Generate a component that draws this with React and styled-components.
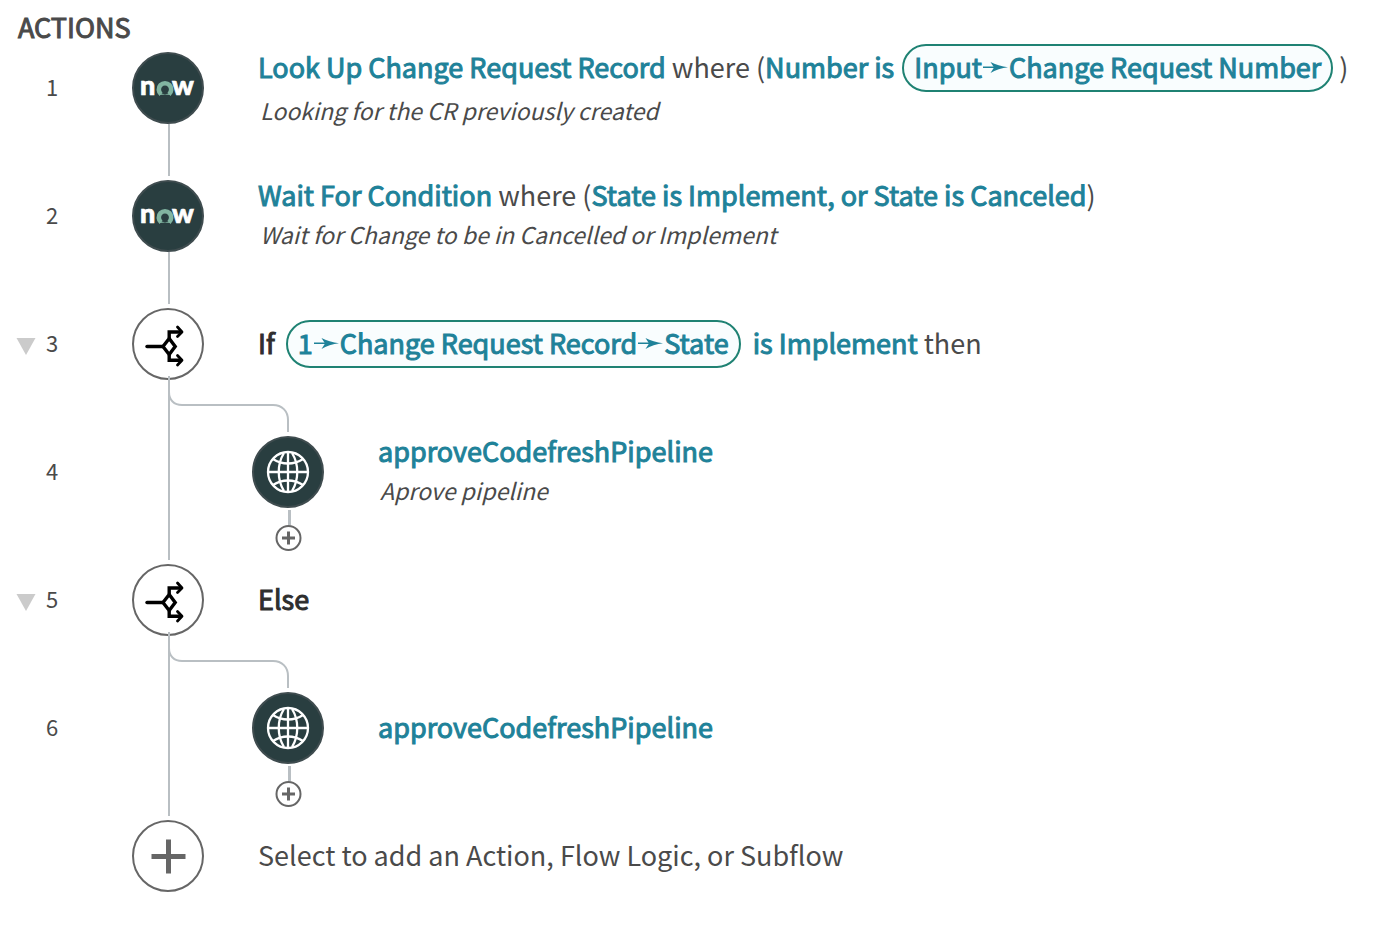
import React from "react";
import styled, { createGlobalStyle, css } from "styled-components";

const GlobalStyle = createGlobalStyle`
  * { box-sizing: border-box; }
  body {
    margin: 0;
    background: #fff;
    color: #4a4a4a;
    font-family: "Noto Sans CJK SC", "Noto Sans CJK JP", sans-serif;
  }
  svg { display: block; overflow: visible; flex: none; }
  button { font: inherit; color: inherit; background: none; border: 0; padding: 0; cursor: pointer; }
`;

const Page = styled.main`
  padding-bottom: 32px;
`;

const Heading = styled.h2`
  margin: 0;
  height: 52px;
  padding: 7px 18px 0;
  font-size: 27px;
  line-height: 40px;
  font-weight: 400;
  -webkit-text-stroke: 1px currentColor;
`;

const Steps = styled.ol`
  list-style: none;
  margin: 0;
  padding: 0;
`;

const Step = styled.li`
  display: flex;
  height: ${(p) => (p.$last ? 72 : 128)}px;
`;

const Gutter = styled.div`
  flex: none;
  width: 132px;
  height: 72px;
  padding-left: 16px;
  display: grid;
  grid-template-columns: 20px 1fr;
  column-gap: 10px;
  align-items: center;
  font-size: 22px;
  line-height: 32px;
`;

const Toggle = styled.button`
  height: 20px;
`;

const StepNumber = styled.span`
  grid-column: 2;
  padding-bottom: 4px;
`;

const Trunk = styled.div`
  flex: none;
  width: 120px;
  height: 124px;
  padding-left: 36px;

  &::before {
    content: "";
    display: block;
    width: 2px;
    height: 100%;
    background: #b9bfc3;
  }
`;

const Rail = styled.div`
  flex: none;
  width: 72px;
`;

const discStyle = css`
  display: flex;
  align-items: center;
  justify-content: center;
  width: 72px;
  height: 72px;
  border: 2px solid ${(p) => (p.$dark ? "#3f4c4f" : "#666")};
  border-radius: 50%;
  background: ${(p) => (p.$dark ? "#293e40" : "#fff")};
`;

const Disc = styled.div`${discStyle}`;
const AddDisc = styled.button`
  &&& {
    ${discStyle}
  }
`;

const Link = styled.div`
  width: 2px;
  height: 52px;
  margin-left: 36px;
  background: #b9bfc3;
`;

const BranchLink = styled.svg`
  margin: -4px 0 0 36px;
`;

const AddStem = styled.div`
  width: 3px;
  height: 15px;
  margin: 2px 0 0 36px;
  background: #b9bfc3;
`;

const AddInside = styled.button`
  display: block;
  width: 26px;
  height: 26px;
  margin-left: 24px;
`;

const Copy = styled.div`
  flex: 1;
  min-width: 0;
  height: 72px;
  padding-left: 54px;
  display: flex;
  flex-direction: column;
  justify-content: center;
`;

const Line = styled.div`
  flex: none;
  display: flex;
  align-items: center;
  min-height: 40px;
  font-size: 27px;
  line-height: 38px;
  white-space: pre;

  & > * {
    padding-bottom: 2px;
  }
`;

const Note = styled.div`
  flex: none;
  height: 40px;
  padding-left: 2px;
  font-size: 23px;
  line-height: 36px;
  font-style: italic;
  white-space: nowrap;
`;

const Strong = styled.span`
  color: ${(p) => (p.$plain ? "#2e2e2e" : "#1f8299")};
  -webkit-text-stroke: 1px currentColor;
`;

const Name = styled.a`
  color: #1f8299;
  text-decoration: none;
  -webkit-text-stroke: 1px currentColor;
`;

const Pill = styled.span`
  display: inline-flex;
  align-items: center;
  height: 48px;
  margin: 0 ${(p) => (p.$wide ? 12 : 6)}px 0 ${(p) => (p.$wide ? 11 : 8)}px;
  padding: 0 10px 2px;
  border: 2px solid #1f8273;
  border-radius: 24px;
  background: #f9fdfe;
  color: #1f8299;
  -webkit-text-stroke: 1px currentColor;
`;

const Wordmark = styled.text`
  font-family: Lato, sans-serif;
  font-size: 27px;
  font-weight: 900;
  fill: #fff;
  stroke: #fff;
  stroke-width: 0.7px;
`;

const NowLogo = () => (
  <svg width="54" height="24" viewBox="0 0 54 24" role="img" aria-label="now">
    <Wordmark x="-1" y="19">n</Wordmark>
    <path d="M20 18.200A6.200 6.200 0 1 1 28 18.200" fill="none" stroke="#81b5a1" strokeWidth="4.6" />
    <path d="M19 16.500Q24 20 29 16.500L29 19Q24 18 19 19Z" fill="#81b5a1" />
    <Wordmark x="31" y="19">w</Wordmark>
  </svg>
);

const BranchIcon = () => (
  <svg width="42" height="42" viewBox="0 0 42 42" fill="none" stroke="#000" strokeWidth="3.4" aria-hidden="true">
    <path d="M0 23.500H16" strokeLinecap="round" />
    <path d="M22.200 15.500L28.200 23.500L22.200 31.500L16 23.500Z" />
    <path d="M22.200 15V9H34M22.200 32V37.300H34" />
    <path d="M30.500 4L35 9L30.500 13.500M30.500 32.500L35 37.300L30.500 42" strokeWidth="2.8" strokeLinecap="round" strokeLinejoin="round" />
  </svg>
);

const GlobeIcon = () => (
  <svg width="42" height="42" viewBox="0 0 42 42" fill="none" stroke="#fff" strokeWidth="2.3" aria-hidden="true">
    <circle cx="21" cy="21" r="20" />
    <path d="M21 1V41M1 21H41" />
    <path d="M17 2C10 13 10 29 17 40M25 2C32 13 32 29 25 40" />
    <path d="M6 8C15 14 27 14 36 8M6 34C15 28 27 28 36 34" />
  </svg>
);

const Arrow = () => (
  <svg width="27" height="12" viewBox="0 0 27 12" aria-hidden="true">
    <path d="M1 5.500H12V7H1Z" fill="currentColor" stroke="none" />
    <path d="M8.500 1C13 3.700 20 5.500 26 6.300C20 7 13 9 8.500 12L12 6.500Z" fill="currentColor" stroke="none" />
  </svg>
);

const PlusIcon = () => (
  <svg width="34" height="34" viewBox="0 0 34 34" aria-hidden="true">
    <path d="M17.500 0.500V34.500M0.500 17.500H34.500" stroke="#666" strokeWidth="5" />
  </svg>
);

const Collapse = ({ label }) => (
  <Toggle type="button" aria-label={label} aria-expanded="true">
    <svg width="20" height="20" viewBox="0 0 20 20" aria-hidden="true">
      <path d="M0.500 4H19.500L10 21Z" fill="#cbcbcb" />
    </svg>
  </Toggle>
);

const BranchConnector = () => (
  <BranchLink width="122" height="60" viewBox="0 0 122 60" fill="none" stroke="#b9bfc3" strokeWidth="2" aria-hidden="true">
    <path d="M1 0V60" />
    <path d="M1 16C1 24 6 29 14 29H105C114 29 120 35 120 44V56" />
  </BranchLink>
);

const AddStep = () => (
  <>
    <AddStem />
    <AddInside type="button" aria-label="Add step to branch">
      <svg width="26" height="26" viewBox="0 0 26 26" fill="none" stroke="#666" aria-hidden="true">
        <circle cx="12.500" cy="13" r="12" strokeWidth="2" />
        <path d="M12.500 6.500V19.500M6 13H19" strokeWidth="3" />
      </svg>
    </AddInside>
  </>
);

const Row = ({ number, kind, collapsible, children }) => {
  const nested = kind === "nested";
  const branch = kind === "branch";
  return (
    <Step>
      <Gutter>
        {collapsible && <Collapse label={`Collapse step ${number}`} />}
        <StepNumber>{number}</StepNumber>
      </Gutter>
      {nested && <Trunk />}
      <Rail>
        <Disc $dark={!branch}>
          {nested ? <GlobeIcon /> : branch ? <BranchIcon /> : <NowLogo />}
        </Disc>
        {nested ? <AddStep /> : branch ? <BranchConnector /> : <Link />}
      </Rail>
      <Copy>{children}</Copy>
    </Step>
  );
};

export default function App() {
  return (
    <Page>
      <GlobalStyle />
      <Heading>ACTIONS</Heading>
      <Steps>
        <Row number={1}>
          <Line>
            <Name href="#lookup">Look Up Change Request Record</Name>
            <span> where (</span>
            <Strong>Number is</Strong>
            <Pill>Input<Arrow />Change Request Number</Pill>
            <span>)</span>
          </Line>
          <Note>Looking for the CR previously created</Note>
        </Row>
        <Row number={2}>
          <Line>
            <Name href="#wait">Wait For Condition</Name>
            <span> where (</span>
            <Strong>State is Implement, or State is Canceled</Strong>
            <span>)</span>
          </Line>
          <Note>Wait for Change to be in Cancelled or Implement</Note>
        </Row>
        <Row number={3} kind="branch" collapsible>
          <Line>
            <Strong $plain>If</Strong>
            <Pill $wide>1<Arrow />Change Request Record<Arrow />State</Pill>
            <Strong>is Implement</Strong>
            <span> then</span>
          </Line>
        </Row>
        <Row number={4} kind="nested">
          <Line><Name href="#approve">approveCodefreshPipeline</Name></Line>
          <Note>Aprove pipeline</Note>
        </Row>
        <Row number={5} kind="branch" collapsible>
          <Line><Strong $plain>Else</Strong></Line>
        </Row>
        <Row number={6} kind="nested">
          <Line><Name href="#approve-else">approveCodefreshPipeline</Name></Line>
        </Row>
        <Step $last>
          <Gutter />
          <Rail>
            <AddDisc type="button" aria-label="Add an Action, Flow Logic, or Subflow"><PlusIcon /></AddDisc>
          </Rail>
          <Copy><Line><span>Select to add an Action, Flow Logic, or Subflow</span></Line></Copy>
        </Step>
      </Steps>
    </Page>
  );
}
